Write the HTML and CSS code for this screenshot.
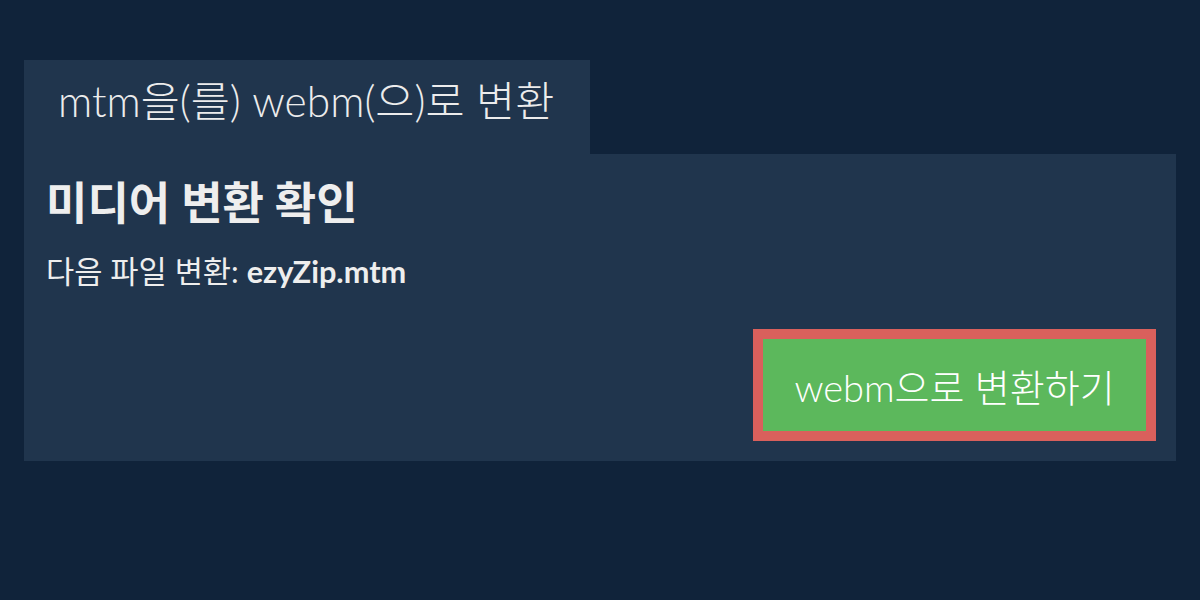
FILE: index.html
```html
<!DOCTYPE html>
<html lang="ko">
<head>
<meta charset="utf-8">
<link rel="stylesheet" href="styles.css">
</head>
<body>
<div class="wrap">
  <div class="tab">mtm을(를) webm(으)로 변환</div>
  <div class="panel">
    <h1 class="title">미디어 변환 확인</h1>
    <p class="sub">다음 파일 변환: <b>ezyZip.mtm</b></p>
    <div class="actions">
      <button class="convert">webm으로 변환하기</button>
    </div>
  </div>
</div>
</body>
</html>
```
FILE: styles.css
```css
html, body {
  margin: 0;
  padding: 0;
  background: #10233a;
  width: 1200px;
  height: 600px;
  overflow: hidden;
}
body {
  font-family: Lato, "Noto Sans CJK KR", sans-serif;
  color: #f2f2f2;
}
.wrap {
  padding: 60px 24px 0 24px;
}
.tab {
  width: 566px;
  background: #20354d;
  height: 94px;
  box-sizing: border-box;
  padding: 11px 0 0 34px;
  font-size: 42.5px;
  font-weight: 300;
  line-height: 60px;
  color: #ececec;
  white-space: nowrap;
}
.panel {
  background: #20354d;
  height: 307px;
  box-sizing: border-box;
  padding: 22px 20px 0 22px;
  display: flex;
  flex-direction: column;
}
.title {
  margin: 0;
  font-size: 45px;
  font-weight: 700;
  line-height: 54px;
  color: #eeeeee;
}
.sub {
  margin: 22px 0 0 0;
  font-size: 30.7px;
  font-weight: 400;
  line-height: 40px;
  color: #eeeeee;
}
.sub b {
  font-weight: 700;
}
.actions {
  display: flex;
  justify-content: flex-end;
  margin-top: 37px;
}
.convert {
  width: 403px;
  height: 112px;
  background: #5cb85c;
  border: 10px solid #d9605c;
  font-family: Lato, "Noto Sans CJK KR", sans-serif;
  font-size: 38px;
  font-weight: 300;
  color: #ffffff;
  padding: 0;
}
```
